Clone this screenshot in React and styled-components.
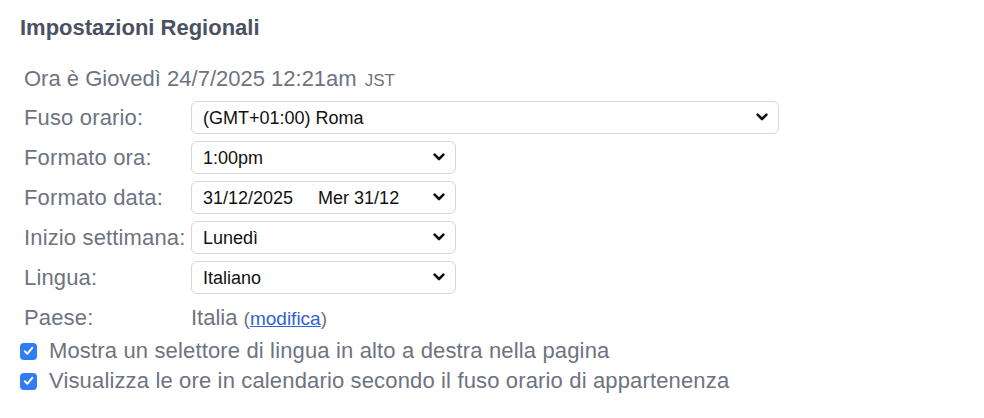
import React from "react";
import styled, { createGlobalStyle } from "styled-components";

const GlobalStyle = createGlobalStyle`
  html, body {
    margin: 0;
    padding: 0;
    background: #ffffff;
  }
  body {
    font-family: "Liberation Sans", Arial, Helvetica, sans-serif;
  }
`;

const Panel = styled.section`
  padding: 14px 20px;
  width: 944px;
`;

const Title = styled.h2`
  margin: 0;
  font-size: 22px;
  line-height: 28px;
  font-weight: 700;
  color: #4a5162;
`;

const Now = styled.div`
  margin: 22px 0 0 4px;
  height: 30px;
  line-height: 30px;
  font-size: 22px;
  color: #6e7381;

  small {
    font-size: 17px;
    margin-left: 2px;
  }
`;

const Form = styled.div`
  margin: 7px 0 0 4px;
  display: grid;
  grid-template-columns: 167px auto;
  grid-auto-rows: 33px;
  row-gap: 7px;
  align-items: center;
`;

const Label = styled.label`
  font-size: 22px;
  letter-spacing: 0.15px;
  color: #6e7381;
  white-space: nowrap;
`;

const SelectWrap = styled.div`
  position: relative;
  width: ${({ $wide }) => ($wide ? "588px" : "265px")};
  height: 33px;

  svg {
    position: absolute;
    right: 11px;
    top: 12px;
    pointer-events: none;
  }
`;

const Select = styled.select`
  appearance: none;
  -webkit-appearance: none;
  box-sizing: border-box;
  width: 100%;
  height: 100%;
  margin: 0;
  padding: 0 30px 0 11px;
  border: 1px solid #d4d6da;
  border-radius: 6px;
  background: #ffffff;
  font-family: "Liberation Sans", Arial, sans-serif;
  font-size: 18px;
  color: #111111;
  outline: none;
`;

const Value = styled.div`
  font-size: 22px;
  color: #6e7381;

  span {
    font-size: 19px;
  }
  a {
    color: #2f63d6;
    text-decoration: underline;
  }
`;

const Checks = styled.div`
  margin-top: 2px;
  display: flex;
  flex-direction: column;
`;

const CheckRow = styled.label`
  display: flex;
  align-items: center;
  gap: 12px;
  height: 30px;
  font-size: 22px;
  letter-spacing: 0.15px;
  color: #6e7381;
`;

const Box = styled.span`
  width: 17px;
  height: 17px;
  border-radius: 4px;
  background: #2f7cf6;
  display: flex;
  align-items: center;
  justify-content: center;
  flex: none;
`;

const Chevron = () => (
  <svg width="12" height="8" viewBox="0 0 12 8">
    <path d="M1.6 1.6 L6 6 L10.4 1.6" fill="none" stroke="#111" strokeWidth="2.6" strokeLinecap="round" strokeLinejoin="round" />
  </svg>
);

const Tick = () => (
  <svg width="11" height="10" viewBox="0 0 11 10">
    <path d="M1.8 5.2 L4.3 7.8 L9.2 1.8" fill="none" stroke="#fff" strokeWidth="2" strokeLinecap="round" strokeLinejoin="round" />
  </svg>
);

const SelectField = ({ wide, value }) => (
  <SelectWrap $wide={wide}>
    <Select defaultValue={value}>
      <option value={value}>{value}</option>
    </Select>
    <Chevron />
  </SelectWrap>
);

const Checkbox = ({ children }) => (
  <CheckRow>
    <Box>
      <Tick />
    </Box>
    {children}
  </CheckRow>
);

const fields = [
  { label: "Fuso orario:", value: "(GMT+01:00) Roma", wide: true },
  { label: "Formato ora:", value: "1:00pm" },
  { label: "Formato data:", value: "31/12/2025\u00a0\u00a0\u00a0\u00a0\u00a0Mer 31/12" },
  { label: "Inizio settimana:", value: "Lunedì" },
  { label: "Lingua:", value: "Italiano" },
];

export default function App() {
  return (
    <>
      <GlobalStyle />
      <Panel>
        <Title>Impostazioni Regionali</Title>
        <Now>
          Ora è Giovedì 24/7/2025 12:21am <small>JST</small>
        </Now>
        <Form>
          {fields.map((f) => (
            <React.Fragment key={f.label}>
              <Label>{f.label}</Label>
              <SelectField wide={f.wide} value={f.value} />
            </React.Fragment>
          ))}
          <Label>Paese:</Label>
          <Value>
            Italia <span>(<a href="#">modifica</a>)</span>
          </Value>
        </Form>
        <Checks>
          <Checkbox>Mostra un selettore di lingua in alto a destra nella pagina</Checkbox>
          <Checkbox>Visualizza le ore in calendario secondo il fuso orario di appartenenza</Checkbox>
        </Checks>
      </Panel>
    </>
  );
}
